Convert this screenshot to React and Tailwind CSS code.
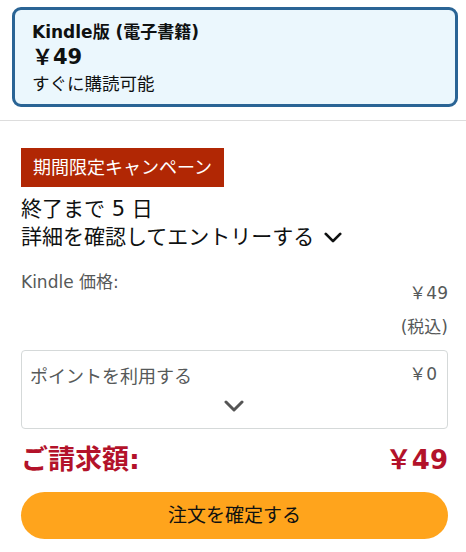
function Chevron({ className = '' }) {
  return (
    <svg viewBox="0 0 20 12" className={className} fill="none" stroke="currentColor" strokeWidth="3" strokeLinecap="round" strokeLinejoin="round">
      <path d="M2 2l8 8 8-8" />
    </svg>
  );
}

export default function App() {
  return (
    <div className="w-[466px] h-[552px] overflow-hidden bg-white text-[#0f1111] font-['DejaVu_Sans','Noto_Sans_CJK_JP',sans-serif]">
      <div className="ml-3 mt-[7px] w-[446px] h-[100px] rounded-[9px] border-[3px] border-[#2a6495] bg-[#ebf7fd] pl-[17px] pt-[10px]">
        <div className="text-[17px] font-bold leading-[24px]">Kindle版 (電子書籍)</div>
        <div className="text-[21px] font-bold leading-[26px]">￥49</div>
        <div className="text-[17.5px] leading-[28px]">すぐに購読可能</div>
      </div>

      <div className="mt-[13px] h-px bg-[#dddddd]" />

      <div className="pl-[21px] pr-[18px]">
        <div className="mt-[27px] w-[203px] h-[39px] bg-[#b12704] text-white text-[18px] leading-[39px] pl-3">
          期間限定キャンペーン
        </div>
        <div className="mt-[8px] text-[21px] leading-[28px]">終了まで 5 日</div>
        <div className="flex items-center gap-[10px] text-[21px] leading-[28px]">
          <span>詳細を確認してエントリーする</span>
          <Chevron className="w-[18px] h-[11px] text-[#0f1111]" />
        </div>

        <div className="flex justify-between items-start text-[17px] text-[#565959]">
          <div className="mt-[19px] leading-[24px]">Kindle 価格:</div>
          <div className="mt-[25px] text-right leading-[34px]">
            <div>￥49</div>
            <div>(税込)</div>
          </div>
        </div>

        <div className="mt-[6px] h-[79px] rounded-[4px] border border-[#d5d9d9] pl-[8px] pr-[10px] text-[#565959]">
          <div className="flex justify-between items-start">
            <div className="mt-[14px] text-[18px] leading-[24px]">ポイントを利用する</div>
            <div className="mt-[11px] text-[17px] leading-[24px]">￥0</div>
          </div>
          <div className="mt-[11px] flex justify-center">
            <Chevron className="w-[20px] h-[12px] text-[#555555]" />
          </div>
        </div>

        <div className="mt-[15px] flex justify-between items-center font-bold text-[#b3122a] leading-[32px]">
          <span className="text-[27px]">ご請求額:</span>
          <span className="text-[26px]">￥49</span>
        </div>

        <button className="mt-[16px] w-full h-[47px] rounded-full bg-[#ffa41c] text-[19px] text-[#0f1111]">
          注文を確定する
        </button>
      </div>
    </div>
  );
}
